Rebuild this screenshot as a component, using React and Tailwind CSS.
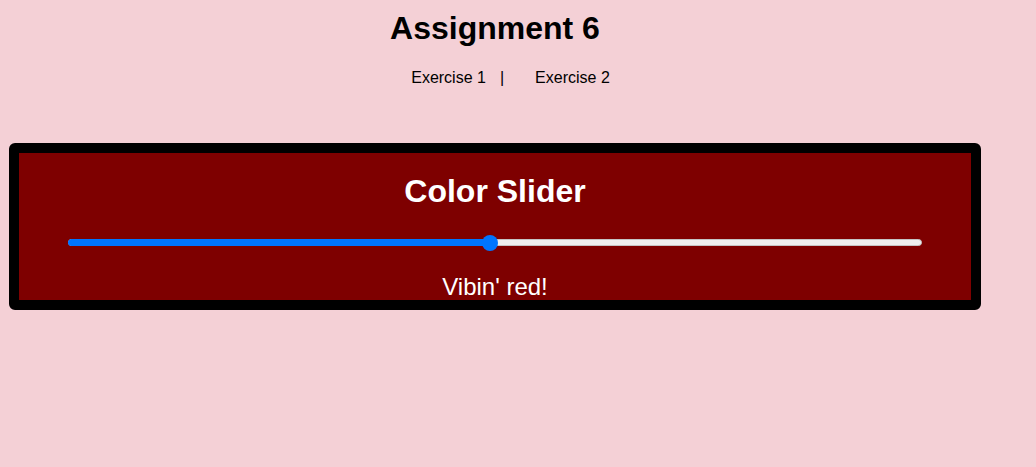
import React, { useState } from 'react';

const ColorSlider = () => {
  const [value, setValue] = useState(126);
  const pct = (value / 255) * 100;

  return (
    <div
      className="mx-[9px] mt-[55px] h-[167px] rounded-[6px] border-[10px] border-black"
      style={{ backgroundColor: `rgb(${value}, 0, 0)` }}
    >
      <div className="flex flex-col items-center pt-[20px]">
        <h2 className="text-[32px] font-bold leading-[37px] text-white">Color Slider</h2>

        {/* slider: drawn track + thumb, real input on top */}
        <div className="relative mt-[25px] h-[16px] w-[854px]">
          <div className="absolute left-0 right-0 top-[4px] h-[7px] rounded-full border border-[#c4c4c4] bg-[#efefef]" />
          <div
            className="absolute left-0 top-[4px] h-[7px] rounded-l-full bg-[#0075ff]"
            style={{ width: `${pct}%` }}
          />
          <div
            className="absolute top-0 h-[16px] w-[16px] -translate-x-1/2 rounded-full bg-[#0075ff]"
            style={{ left: `${pct}%` }}
          />
          <input
            type="range"
            min="0"
            max="255"
            value={value}
            onChange={(e) => setValue(Number(e.target.value))}
            className="absolute inset-0 h-full w-full cursor-pointer opacity-0"
          />
        </div>

        <p className="mt-[22px] text-[24px] leading-[28px] text-white">Vibin' red!</p>
      </div>
    </div>
  );
};

export default function App() {
  return (
    <div className="min-h-screen w-full bg-[#f4d0d6] pt-[10px] font-['Liberation_Sans',Arial,sans-serif] text-black">
      <div className="w-[990px]">
        <h1 className="text-center text-[32px] font-bold leading-[37px]">Assignment 6</h1>

        <nav className="mt-[21px] flex justify-center pl-[31px] text-[16px] leading-[20px]">
          <a href="#ex1" className="text-black">Exercise 1</a>
          <span className="ml-[14px]">|</span>
          <a href="#ex2" className="ml-[31px] text-black">Exercise 2</a>
        </nav>

        <ColorSlider />
      </div>
    </div>
  );
}
